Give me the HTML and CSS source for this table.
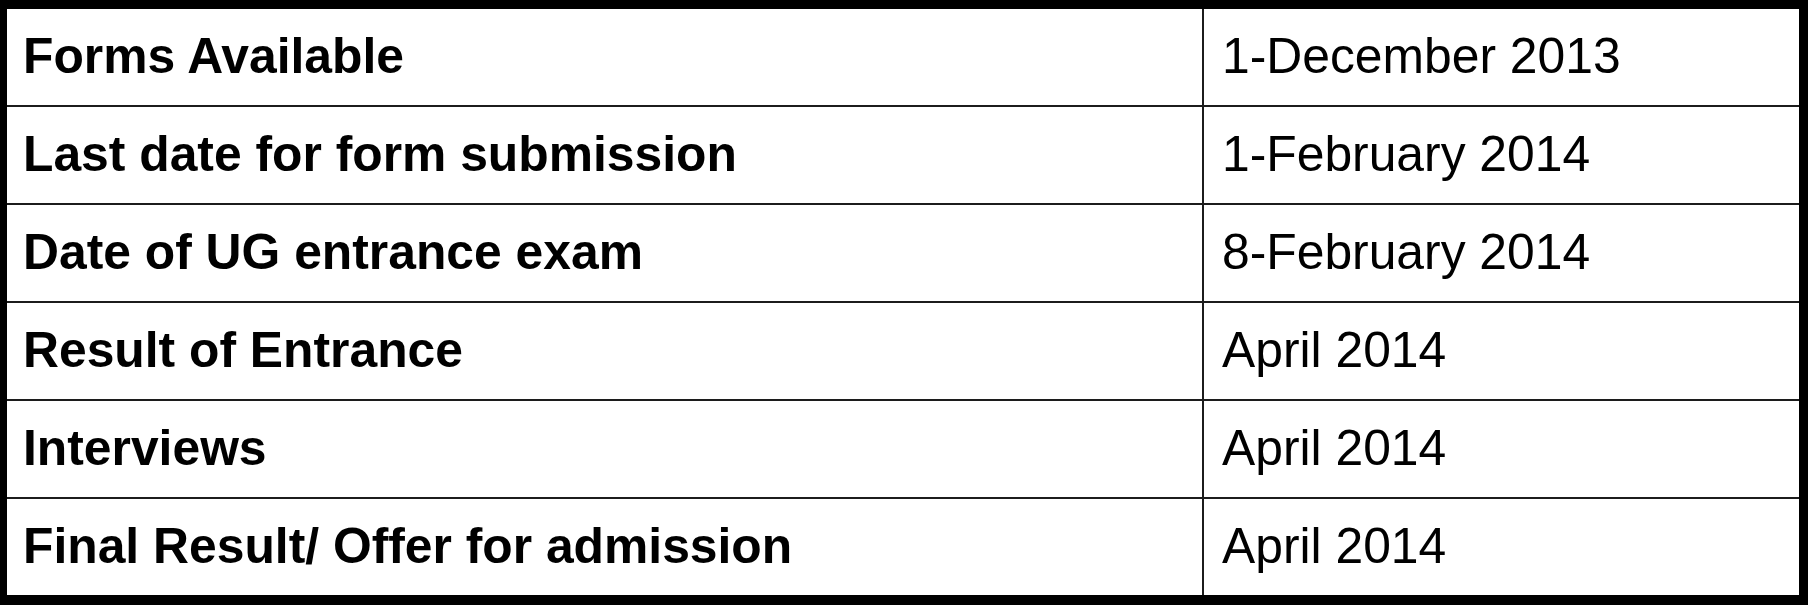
FILE: index.html
```html
<!DOCTYPE html>
<html>
<head>
<meta charset="utf-8">
<link rel="stylesheet" href="styles.css">
</head>
<body>
<div class="schedule">
  <div class="cell label">Forms Available</div>
  <div class="cell value">1-December 2013</div>
  <div class="cell label">Last date for form submission</div>
  <div class="cell value">1-February 2014</div>
  <div class="cell label">Date of UG entrance exam</div>
  <div class="cell value">8-February 2014</div>
  <div class="cell label">Result of Entrance</div>
  <div class="cell value">April 2014</div>
  <div class="cell label">Interviews</div>
  <div class="cell value">April 2014</div>
  <div class="cell label last">Final Result/ Offer for admission</div>
  <div class="cell value last">April 2014</div>
</div>
</body>
</html>
```

FILE: styles.css
```css
html, body {
  margin: 0;
  padding: 0;
  background: #ffffff;
}

.schedule {
  width: 1808px;
  height: 605px;
  box-sizing: border-box;
  border-style: solid;
  border-color: #000;
  border-width: 9px 9px 10px 7px;
  display: grid;
  grid-template-columns: 1197px 1fr;
  grid-template-rows: repeat(5, 98px) 96px;
  font-family: "Liberation Sans", Arial, sans-serif;
  font-size: 49.8px;
  color: #000;
}

.cell {
  display: flex;
  align-items: center;
  box-sizing: border-box;
  border-bottom: 2px solid #1c1c1c;
  line-height: 1;
}

.cell.last {
  border-bottom: none;
}

.label {
  font-weight: bold;
  padding-left: 16px;
  border-right: 2px solid #1c1c1c;
}

.value {
  font-weight: normal;
  padding-left: 18px;
}
```
